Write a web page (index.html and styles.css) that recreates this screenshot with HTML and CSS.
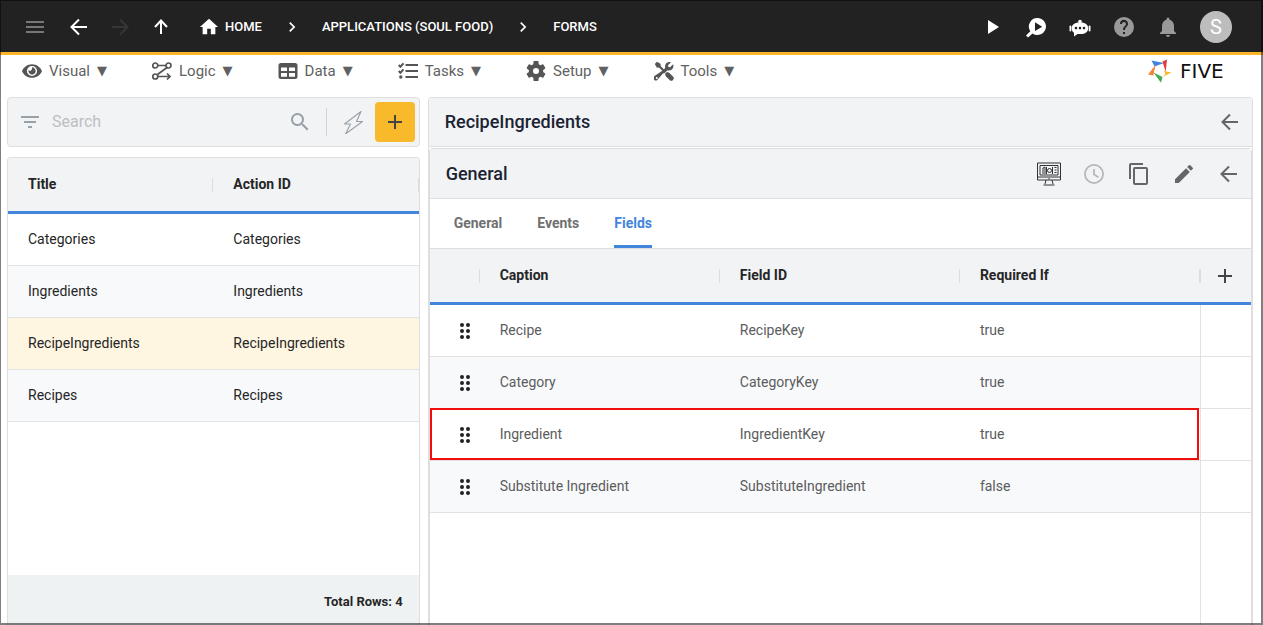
FILE: index.html
```html
<!DOCTYPE html>
<html lang="en">
<head>
<meta charset="utf-8">
<meta name="viewport" content="width=device-width, initial-scale=1">
<title>Five - Forms</title>
<link rel="stylesheet" href="styles.css">
</head>
<body>
<div class="app">
  <header class="topbar">
    <button class="icon-btn muted" aria-label="Menu"><svg viewBox="0 0 24 24"><path d="M3 18h18v-2H3zm0-5h18v-2H3zm0-7v2h18V6z"/></svg></button>
    <div class="history">
      <button class="icon-btn" aria-label="Back"><svg viewBox="0 0 24 24"><path class="line" d="M20 12H5M12 4.500 4.500 12l7.500 7.500"/></svg></button>
      <button class="icon-btn faded" aria-label="Forward" disabled><svg viewBox="0 0 24 24"><path class="line" d="M4 12h15M12 4.500l7.500 7.500-7.500 7.500"/></svg></button>
      <button class="icon-btn" aria-label="Up"><svg viewBox="0 0 24 24"><path class="line" d="M12 19V6M6 12l6-6.500 6 6.500"/></svg></button>
    </div>
    <nav class="crumbs" aria-label="Breadcrumb">
      <a href="#home"><svg class="i20" viewBox="1 1 22 22"><path d="M10 20v-6h4v6h5v-8h3L12 3 2 12h3v8z"/></svg>HOME</a>
      <svg class="i20" viewBox="0 0 24 24"><path d="M8.600 16.600 13.200 12 8.600 7.400 10 6l6 6-6 6z"/></svg>
      <a href="#apps">APPLICATIONS (SOUL FOOD)</a>
      <svg class="i20" viewBox="0 0 24 24"><path d="M8.600 16.600 13.200 12 8.600 7.400 10 6l6 6-6 6z"/></svg>
      <a href="#forms">FORMS</a>
    </nav>
    <div class="tools">
      <button class="icon-btn" aria-label="Run"><svg viewBox="0 0 24 24"><path d="M8 5v14l11-7z"/></svg></button>
      <button class="icon-btn" aria-label="Inspect"><svg viewBox="0 0 24 24"><path fill-rule="evenodd" d="M13.500 3a8.500 8.500 0 1 1-5 15.400L4 22.500 2 20.500l4.300-4.300A8.500 8.500 0 0 1 13.500 3zM11 7.300v8.800l7.200-4.400z"/></svg></button>
      <button class="icon-btn" aria-label="Assistant"><svg viewBox="0 0 24 24"><circle cx="12" cy="6.500" r="1.800"/><rect x="1.500" y="10.500" width="1.800" height="6" rx=".9"/><rect x="20.700" y="10.500" width="1.800" height="6" rx=".9"/><path fill-rule="evenodd" d="M10 7.500h4c4 .6 6.200 2.700 6.200 5.700 0 3.600-3.200 5.800-7.200 5.800H9.500L6 21.500v-3.700c-1.500-1-2.300-2.600-2.300-4.600 0-3 2.300-5.100 6.300-5.700zM8 11.800a1.300 1.300 0 1 0 .01 2.600A1.300 1.300 0 0 0 8 11.800zm4 0a1.300 1.300 0 1 0 .01 2.600 1.300 1.300 0 0 0-.01-2.600zm4 0a1.300 1.300 0 1 0 .01 2.600 1.300 1.300 0 0 0-.01-2.600z"/></svg></button>
      <button class="icon-btn grey" aria-label="Help"><svg viewBox="0 0 24 24"><path d="M12 2a10 10 0 1 0 0 20 10 10 0 0 0 0-20zm1 17h-2v-2h2zm2.070-7.750-.9.920C13.450 12.900 13 13.500 13 15h-2v-.5c0-1.100.450-2.100 1.170-2.830l1.240-1.260A2 2 0 1 0 10 9H8a4 4 0 1 1 7.070 2.250z"/></svg></button>
      <button class="icon-btn grey" aria-label="Notifications"><svg viewBox="0 0 24 24"><path d="M12 22a2 2 0 0 0 2-2h-4a2 2 0 0 0 2 2zm6-6v-5c0-3.070-1.640-5.640-4.500-6.320V4a1.500 1.500 0 0 0-3 0v.680C7.630 5.360 6 7.920 6 11v5l-2 2v1h16v-1z"/></svg></button>
      <button class="avatar" aria-label="Account">S</button>
    </div>
  </header>

  <nav class="menubar" aria-label="Main">
    <button><svg class="i20" viewBox="1 2 22 20"><path fill-rule="evenodd" d="M12 4.500C7 4.500 2.700 7.600 1 12c1.700 4.400 6 7.500 11 7.500s9.300-3.100 11-7.500c-1.700-4.400-6-7.500-11-7.500zm0 1.900a5.600 5.600 0 1 0 0 11.200 5.600 5.600 0 0 0 0-11.200z"/><path d="M12 8a4 4 0 1 1-3.900 3.200l2.200.8L12 10z"/></svg>Visual <span class="caret">▼</span></button>
    <button><svg class="i20" viewBox="0 0 20 20"><g fill="none" stroke="currentColor" stroke-width="1.700"><circle cx="3.300" cy="4.500" r="2.500"/><circle cx="16.500" cy="4.500" r="2.500"/><circle cx="3.300" cy="15.500" r="2.500"/><path d="M6 4.500h8M15 6.500 5.500 13.500M6 15.500h12M15 12.500l3 3-3 3"/></g></svg>Logic <span class="caret">▼</span></button>
    <button><svg class="i20" viewBox="0 0 20 20"><path fill-rule="evenodd" d="M3 2h14a2.500 2.500 0 0 1 2.500 2.500v11A2.500 2.500 0 0 1 17 18H3a2.500 2.500 0 0 1-2.500-2.500v-11A2.500 2.500 0 0 1 3 2zM3 6.500V10h6V6.500zm8 0V10h6V6.500zM3 12v3.700h6V12zm8 0v3.700h6V12z"/></svg>Data <span class="caret">▼</span></button>
    <button><svg class="i20" viewBox="0 0 20 20"><path d="M7.500 3H20v2H7.500zM7.500 9H20v2H7.500zM7.500 15H20v2H7.500z"/><circle cx="2.800" cy="16" r="1.700"/><path class="line" d="m.7 4 1.700 1.700L5.500 2.300M.7 10l1.700 1.700 3.100-3.400"/></svg>Tasks <span class="caret">▼</span></button>
    <button><svg class="i20" viewBox="2 2 20 20"><path d="M19.140 12.940c.04-.3.060-.61.060-.94s-.02-.64-.07-.94l2.030-1.580a.5.500 0 0 0 .12-.61l-1.920-3.320a.5.500 0 0 0-.59-.22l-2.390.960a7 7 0 0 0-1.620-.94L14.400 2.100h-4.800l-.36 3.250a7 7 0 0 0-1.620.94l-2.390-.96a.5.500 0 0 0-.59.220L2.720 8.870a.5.500 0 0 0 .12.610l2.030 1.580a7 7 0 0 0 0 1.880l-2.030 1.580a.5.500 0 0 0-.12.610l1.920 3.320c.12.220.37.290.59.220l2.390-.96c.5.380 1.030.7 1.620.94l.36 3.250h4.800l.36-3.250a7 7 0 0 0 1.620-.94l2.390.960c.22.080.47 0 .59-.22l1.920-3.320a.5.500 0 0 0-.12-.61zM12 15a3 3 0 1 1 0-6 3 3 0 0 1 0 6z"/></svg>Setup <span class="caret">▼</span></button>
    <button><svg class="i20" viewBox="0 0 20 20"><path d="M.8 3 3 .8l3.500 2 .3 2.500 4.200 4.200-1.500 1.500-4.200-4.200-2.500-.3z"/><path d="M11.300 12.500l1.700-1.600c1 .2 1.700.4 2.400 1.100l3.600 3.600a2.400 2.400 0 0 1-3.400 3.400L12 15.400c-.7-.8-1-1.800-.7-2.900z"/><path fill-rule="evenodd" d="M17 1.200 14 4.200l.4 1.700 1.700.4 3-3c1 2.600-.3 6.200-4 6.200-.7 0-1.200-.1-1.600-.3l-3 3c-1.200-.2-1.500.2-2.200 1l-4.800 5.500a2.400 2.400 0 0 1-3.400-3.400L9.500 9l1.700-2.300C10.300 3.500 13 .2 17 1.200zM2.800 16.100a1 1 0 1 0 .01 2 1 1 0 0 0-.01-2z"/></svg>Tools <span class="caret">▼</span></button>
    <a class="logo" href="#five"><svg viewBox="0 0 24 24"><path fill="#4285dc" d="M3.500 1.500 16 4 6.500 7.500z"/><path fill="#e23b3d" d="m14.500 2.500 4.500-2-1.300 12.500z"/><path fill="#fab828" d="m23.500 13.500-9 4.500 3-3-1.500-3z"/><path fill="#43aa57" d="m5.500 13.500 9 4.500-1.500 5.700z"/><path fill="#f58133" d="M7.500 6 5.300 16.500 0 15.500z"/></svg>FIVE</a>
  </nav>

  <main class="content">
    <section class="side">
      <div class="searchbar">
        <svg class="i24 slate" viewBox="0 0 24 24"><path d="M10 18h4v-2h-4zM3 6v2h18V6zm3 7h12v-2H6z"/></svg>
        <input type="text" placeholder="Search" aria-label="Search">
        <button class="icon-btn slate" aria-label="Search"><svg viewBox="0 0 24 24"><path d="M15.500 14h-.79l-.28-.27A6.500 6.500 0 1 0 13.730 14.430l.27.280v.79l5 5L20.500 19zm-6 0a4.500 4.500 0 1 1 0-9 4.500 4.500 0 0 1 0 9z"/></svg></button>
        <span class="divider"></span>
        <button class="icon-btn slate" aria-label="Quick actions"><svg viewBox="0 0 24 24"><path fill="none" stroke="currentColor" stroke-width="1.100" stroke-linejoin="round" d="M20 1.500 3.500 14h6L4.500 24 21.500 11.500h-6z"/></svg></button>
        <button class="add" aria-label="Add"><svg class="i24" viewBox="0 0 24 24"><path d="M19 13h-6v6h-2v-6H5v-2h6V5h2v6h6z"/></svg></button>
      </div>
      <div class="listcard">
        <table class="grid list">
          <thead><tr><th>Title</th><th>Action ID</th></tr></thead>
          <tbody>
            <tr><td>Categories</td><td>Categories</td></tr>
            <tr><td>Ingredients</td><td>Ingredients</td></tr>
            <tr class="selected"><td>RecipeIngredients</td><td>RecipeIngredients</td></tr>
            <tr><td>Recipes</td><td>Recipes</td></tr>
          </tbody>
        </table>
        <footer class="total">Total Rows: 4</footer>
      </div>
    </section>

    <section class="detail">
      <div class="titlebar">
        <h1>RecipeIngredients</h1>
        <button class="icon-btn" aria-label="Close form"><svg viewBox="0 0 24 24"><path class="line" d="M20 12H5M12 4.500 4.500 12l7.500 7.500"/></svg></button>
      </div>
      <div class="card">
        <div class="titlebar">
          <h2>General</h2>
          <div class="actions">
            <button class="icon-btn dark" aria-label="Preview"><svg viewBox="0 0 24 24"><g fill="none" stroke="currentColor"><path d="M.5 1h23v17H.5zM.5 15h23M3 3.500h18v9.500H3z"/><path d="M9 18l-1 4M15 18l1 4M6.500 23h11M12 16v1.500M6 12V6l2-1v7M9.500 12V5M15.500 5v7M17.500 5.500h2M17.500 8h2M17.500 10.500h2"/><circle cx="12.500" cy="8.500" r="2"/></g></svg></button>
            <button class="icon-btn pale" aria-label="History" disabled><svg viewBox="0 0 24 24"><path fill="none" stroke="currentColor" stroke-width="1.800" d="M12 2.900a9.100 9.100 0 1 0 0 18.200 9.100 9.100 0 0 0 0-18.200zM12 7v5.500l4.500 2.700"/></svg></button>
            <button class="icon-btn" aria-label="Copy"><svg viewBox="0 0 24 24"><path d="M16 1H4a2 2 0 0 0-2 2v14h2V3h12zm3 4H8a2 2 0 0 0-2 2v14c0 1.100.9 2 2 2h11a2 2 0 0 0 2-2V7a2 2 0 0 0-2-2zm0 16H8V7h11z"/></svg></button>
            <button class="icon-btn" aria-label="Edit"><svg viewBox="0 0 24 24"><path d="M3 17.250V21h3.750L17.810 9.940l-3.750-3.750zM20.710 7.040a1 1 0 0 0 0-1.410l-2.340-2.340a1 1 0 0 0-1.410 0l-1.830 1.830 3.750 3.750z"/></svg></button>
            <button class="icon-btn" aria-label="Close general"><svg viewBox="0 0 24 24"><path class="line" d="M20 12H5M12 4.500 4.500 12l7.500 7.500"/></svg></button>
          </div>
        </div>
        <div class="tabs" role="tablist">
          <button role="tab" aria-selected="false">General</button>
          <button role="tab" aria-selected="false">Events</button>
          <button role="tab" aria-selected="true">Fields</button>
        </div>
        <table class="grid fields">
          <colgroup><col class="c-drag"><col><col><col><col class="c-add"></colgroup>
          <thead><tr><th></th><th>Caption</th><th>Field ID</th><th>Required If</th><th class="end"><button class="icon-btn" aria-label="Add field"><svg viewBox="0 0 24 24"><path d="M19 13h-6v6h-2v-6H5v-2h6V5h2v6h6z"/></svg></button></th></tr></thead>
          <tbody>
            <tr><td><svg class="grip" viewBox="0 0 10 16"><path d="M2 2h0M8 2h0M2 8h0M8 8h0M2 14h0M8 14h0"/></svg></td><td>Recipe</td><td>RecipeKey</td><td>true</td><td class="end"></td></tr>
            <tr><td><svg class="grip" viewBox="0 0 10 16"><path d="M2 2h0M8 2h0M2 8h0M8 8h0M2 14h0M8 14h0"/></svg></td><td>Category</td><td>CategoryKey</td><td>true</td><td class="end"></td></tr>
            <tr class="marked"><td><svg class="grip" viewBox="0 0 10 16"><path d="M2 2h0M8 2h0M2 8h0M8 8h0M2 14h0M8 14h0"/></svg></td><td>Ingredient</td><td>IngredientKey</td><td>true</td><td class="end"></td></tr>
            <tr><td><svg class="grip" viewBox="0 0 10 16"><path d="M2 2h0M8 2h0M2 8h0M8 8h0M2 14h0M8 14h0"/></svg></td><td>Substitute Ingredient</td><td>SubstituteIngredient</td><td>false</td><td class="end"></td></tr>
          </tbody>
        </table>
        <div class="filler"></div>
      </div>
    </section>
  </main>
</div>
</body>
</html>
```

FILE: styles.css
```css
* { box-sizing: border-box; }
body {
  margin: 0;
  font: 14px/20px Roboto, "Liberation Sans", sans-serif;
  color: #262626;
  background: #fff;
}
button {
  font: inherit;
  color: inherit;
  background: none;
  border: 0;
  padding: 0;
}
svg { display: block; fill: currentColor; flex: none; }
.line { fill: none; stroke: currentColor; stroke-width: 2; }
.i20 { width: 20px; height: 20px; }
.i24 { width: 24px; height: 24px; }
.icon-btn { flex: none; width: 24px; height: 24px; }
.icon-btn svg { width: 24px; height: 24px; }

.app { height: 100vh; display: flex; flex-direction: column; overflow: hidden; }
/* Window frame drawn over the page edges */
.app::after {
  content: "";
  position: fixed;
  inset: 0;
  border: solid rgba(0, 0, 0, .5);
  border-width: 1px 2px 2px 1px;
  pointer-events: none;
}

/* Top bar */
.topbar {
  flex: none;
  display: flex;
  align-items: center;
  height: 55px;
  padding: 2px 31px 0 23px;
  background: #222;
  border-bottom: 3px solid #fbb52b;
  color: #fff;
}
.muted { color: #777; }
.faded { color: #363636; }
.grey { color: #999; }
.history { display: flex; gap: 17px; margin: 0 26px 0 20px; }
.crumbs { display: flex; align-items: center; gap: 20px; font-size: 13px; font-weight: 500; }
.crumbs a { display: flex; align-items: center; gap: 6px; color: inherit; text-decoration: none; }
.tools { display: flex; align-items: center; gap: 20px; margin-left: auto; }
.avatar { width: 32px; height: 32px; border-radius: 50%; background: #bdbdbd; font-size: 20px; }

/* Menu bar */
.menubar { flex: none; display: flex; align-items: center; gap: 45px; height: 34px; padding: 0 27px 2px 22px; color: #616161; }
.menubar button { display: flex; align-items: center; gap: 7px; font-size: 15px; }
.menubar .i20 { color: #555; }
.caret { font: 13px/20px "DejaVu Sans", sans-serif; }
.logo {
  display: flex;
  align-items: center;
  gap: 8px;
  min-width: 88px;
  margin-left: auto;
  color: #111;
  font: 20px/24px "DejaVu Sans", sans-serif;
  text-decoration: none;
}
.logo svg { width: 24px; height: 24px; }

.content { flex: 1; min-height: 0; display: grid; grid-template-columns: 1fr 2fr; gap: 8px; padding: 8px 10px 0 7px; }

/* Left list */
.side { display: flex; flex-direction: column; gap: 10px; min-width: 0; min-height: 0; }
.searchbar {
  flex: none;
  display: flex;
  align-items: center;
  height: 50px;
  padding: 0 4px 0 10px;
  border: 1px solid #dedede;
  border-radius: 4px;
  background: #f1f3f5;
}
.searchbar input { flex: 1; min-width: 0; margin-left: 8px; padding: 0 2px; border: 0; background: none; font: 16px/24px Roboto, sans-serif; }
.searchbar input::placeholder { color: #bcc0c3; opacity: 1; }
.slate { color: #98a1a8; }
.divider { width: 1px; height: 28px; margin: 0 14px; background: #d2d4d6; }
.add { display: grid; place-items: center; width: 40px; height: 40px; margin-left: 10px; border-radius: 4px; background: #f8b92b; color: #444; }
.listcard { flex: 1; display: flex; flex-direction: column; overflow: hidden; border: 1px solid #dedede; border-bottom: 0; border-radius: 4px 4px 0 0; }
.total { margin-top: auto; padding: 17px 16px 13px; background: #eef2f3; font-size: 13px; font-weight: 700; text-align: right; }

/* Tables */
.grid { width: 100%; table-layout: fixed; border-collapse: separate; border-spacing: 0; text-align: left; }
.grid th { height: 56px; padding: 0 20px 2px; background: #f1f3f5; border-bottom: 3px solid #4285dc; font-weight: 700; }
.grid th:not(:last-child), .list th {
  background: linear-gradient(#dcdee0, #dcdee0) right 20px / 1px 14px no-repeat #f1f3f5;
}
.grid td { height: 52px; padding: 0 20px 2px; border-bottom: 1px solid #e2e2e2; }
.grid tbody tr:nth-child(even) td { background: #f8f9fb; }
.grid tbody tr.selected td { background: #fff6e2; }

/* Right side */
.detail { display: flex; flex-direction: column; min-width: 0; min-height: 0; border: 1px solid #dedede; border-bottom: 0; border-radius: 4px 4px 0 0; }
.titlebar {
  flex: none;
  display: flex;
  align-items: center;
  justify-content: space-between;
  height: 49px;
  padding: 0 10px 0 16px;
  background: #f1f3f5;
  border-bottom: 1px solid #dedede;
  color: #666;
}
.titlebar h1, .titlebar h2 { margin: 0; color: #1b2333; font-size: 18px; line-height: 24px; font-weight: 500; }
.card .titlebar { height: 50px; }
.actions { display: flex; gap: 21px; }
.dark { color: #333; }
.pale { color: #b5b7b9; }
.card { flex: 1; display: flex; flex-direction: column; margin-top: 1px; border: 1px solid #dedede; border-bottom: 0; border-radius: 4px 4px 0 0; }
.tabs { display: flex; gap: 35px; height: 50px; padding: 0 24px; border-bottom: 1px solid #dedede; color: #707070; font-weight: 700; }
.tabs button { border: solid transparent; border-width: 3px 0; padding-bottom: 2px; }
.tabs [aria-selected="true"] { color: #4285dc; border-bottom-color: #4285dc; }
.c-drag { width: 50px; }
.c-add { width: 51px; }
.fields td { color: #5c5c5c; }
.fields td:first-child { padding: 0 0 0 30px; }
.fields .end { padding: 0 13px; }
.fields th.end { background: linear-gradient(#dcdee0, #dcdee0) left 20px / 1px 14px no-repeat #f1f3f5; color: #444; }
.fields th .icon-btn { display: block; }
.fields td.end, .fields tbody tr:nth-child(even) td.end { background: #fff; border-left: 1px solid #e2e2e2; }
.grip { width: 10px; height: 16px; fill: none; stroke: #222; stroke-width: 4; stroke-linecap: round; }
.marked { position: relative; }
.marked td:first-child::after { content: ""; position: absolute; inset: -1px 52px 1px 0; border: 2px solid #f20d0d; pointer-events: none; }
.filler { flex: 1; width: 51px; margin-left: auto; border-left: 1px solid #e2e2e2; }
```
